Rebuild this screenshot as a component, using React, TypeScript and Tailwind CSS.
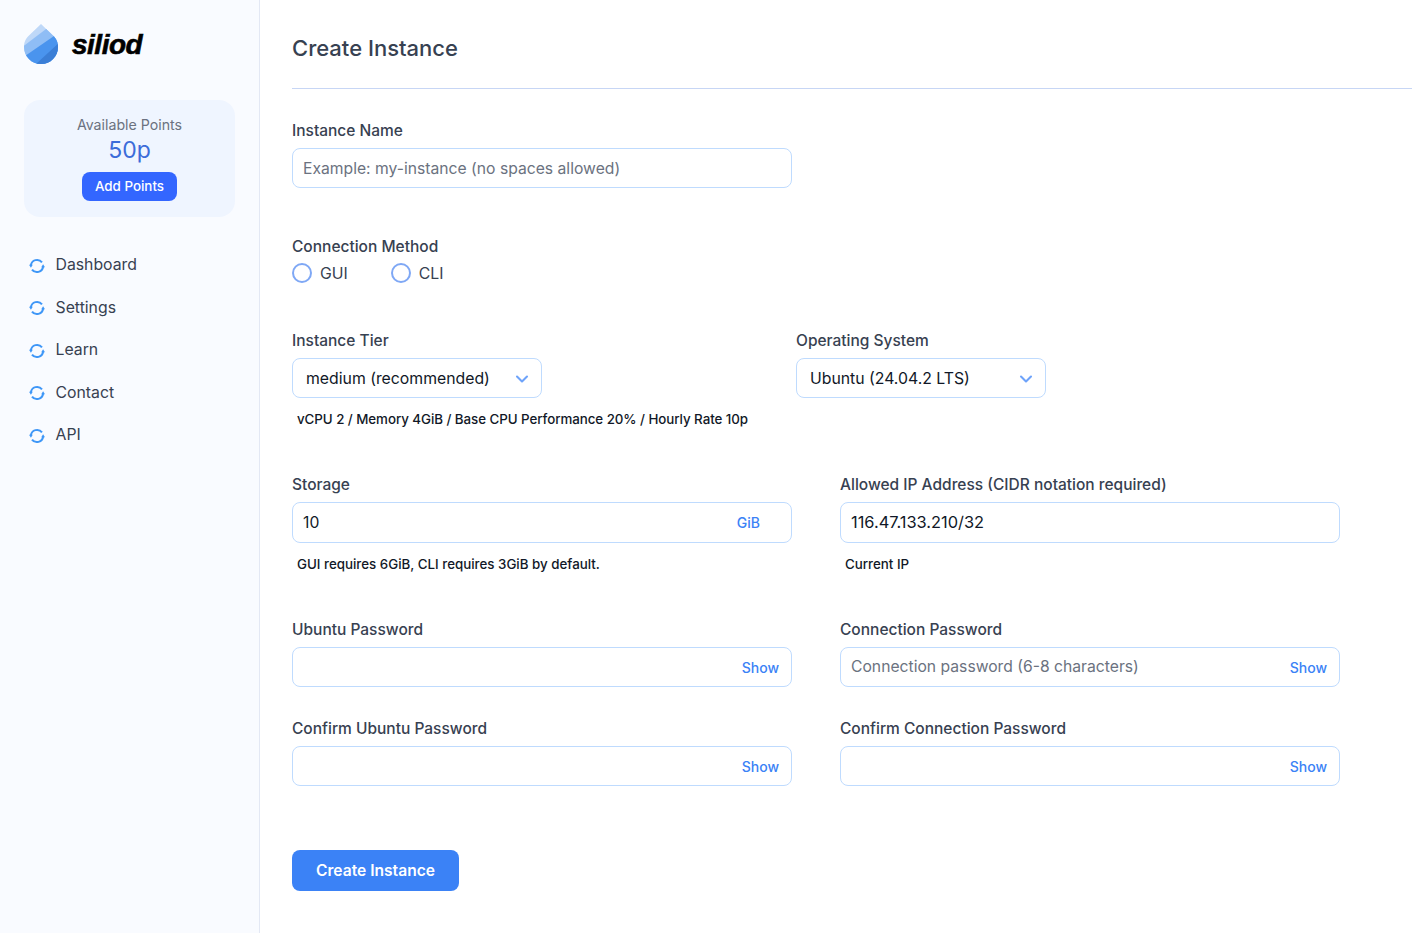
import { ChevronDown } from "lucide-react";

const navItems = ["Dashboard", "Settings", "Learn", "Contact", "API"];

function Logo() {
  return (
    <svg width="34" height="40" viewBox="0 0 34 40" className="shrink-0">
      <defs>
        <clipPath id="drop">
          <path d="M17 0 L28.5 11 C33 15 34 19 34 23 C34 32.5 26.5 40 17 40 C7.5 40 0 32.5 0 23 C0 19 1 15 5.5 11 Z" />
        </clipPath>
      </defs>
      <g clipPath="url(#drop)">
        <rect width="34" height="40" fill="#bfd8f8" />
        <path d="M-3 24 L26 2 L40 2 L40 44 L-3 44 Z" fill="#8fbdf5" />
        <path d="M1 32 L36 8 L40 44 L1 44 Z" fill="#4a94ee" />
        <path d="M12 40 L36 18 L40 44 Z" fill="#3b7ed6" />
      </g>
    </svg>
  );
}

function SyncIcon() {
  return (
    <svg width="16" height="16" viewBox="0 0 16 16" fill="none" className="shrink-0 text-[#3f97f7] mt-[2px]">
      <path d="M1.9 7.4 A6.2 6.2 0 0 1 13 4.4" stroke="currentColor" strokeWidth="2" />
      <path d="M14.1 8.6 A6.2 6.2 0 0 1 3 11.6" stroke="currentColor" strokeWidth="2" />
      <path d="M0 6.8 L3.8 6.8 L1.9 9.8 Z" fill="currentColor" />
      <path d="M12.2 9.2 L16 9.2 L14.1 6.2 Z" fill="currentColor" />
    </svg>
  );
}

function Sidebar() {
  return (
    <aside className="w-[260px] shrink-0 min-h-[933px] bg-[#f9fbff] border-r border-[#e3e8f4] pt-6 px-6">
      <div className="flex items-center gap-[14px] h-10">
        <Logo />
        <span className="mt-[1px] text-[28px] leading-none font-bold italic text-black font-['Liberation_Sans',sans-serif] tracking-[-0.5px] [-webkit-text-stroke:0.6px_black]">siliod</span>
      </div>
      <div className="mt-9 w-[211px] h-[117px] rounded-2xl bg-[#eff5ff] flex flex-col items-center pt-[16px]">
        <div className="text-[14.2px] leading-[18px] text-[#6b7280]">Available Points</div>
        <div className="text-[23px] leading-[30px] mt-[1px] text-[#3b6cd9]">50p</div>
        <button className="mt-[7px] h-[29px] w-[95px] rounded-lg bg-[#3366ff] text-white text-[13.4px] font-medium">Add Points</button>
      </div>
      <nav className="mt-[35px] flex flex-col gap-[17.5px]">
        {navItems.map(item => (
          <div key={item} className="flex items-center gap-[10.5px] pl-[5px] h-[25px]">
            <SyncIcon />
            <span className="text-[15.8px] leading-[25px] text-[#374151]">{item}</span>
          </div>
        ))}
      </nav>
    </aside>
  );
}

function Label({ children }: { children: React.ReactNode }) {
  return <div className="pt-[1px] text-[15.5px] leading-[20px] font-medium text-[#374151]">{children}</div>;
}

function Field({ label, placeholder, right }: { label: string; placeholder?: string; right?: string }) {
  return (
    <div className="w-[500px]">
      <Label>{label}</Label>
      <div className="mt-[7px] h-10 rounded-lg border border-[#bfdbfe] flex items-center justify-between pl-[10px] pr-3 text-[15.7px]">
        {placeholder ? <span className={`text-[#6b7280] ${right ? "-mt-[1px]" : "mt-[1px]"}`}>{placeholder}</span> : <span />}
        {right && <span className="text-sm font-medium text-[#3b82f6] mt-[2px]">{right}</span>}
      </div>
    </div>
  );
}

function Select({ label, value }: { label: string; value: string }) {
  return (
    <div className="w-[250px]">
      <Label>{label}</Label>
      <div className="mt-[7px] h-10 rounded-lg border border-[#bfdbfe] flex items-center justify-between pl-[13px] pr-[9px]">
        <span className="mt-[1px] text-[15.8px] text-[#111827]">{value}</span>
        <ChevronDown className="w-5 h-5 text-[#6ea3fa] mt-[1px]" strokeWidth={2.5} />
      </div>
    </div>
  );
}

function Radio({ label }: { label: string }) {
  return (
    <div className="flex items-center gap-2">
      <span className="w-5 h-5 mb-[2px] rounded-full border-2 border-[#7fa8f5] bg-white" />
      <span className="text-[15.8px] text-[#374151]">{label}</span>
    </div>
  );
}

function Note({ children }: { children: React.ReactNode }) {
  return <div className="text-[13.33px] leading-[18px] font-medium text-[#111827] pl-[5px]">{children}</div>;
}

export default function App() {
  return (
    <div className="flex min-h-[933px] bg-white font-['Inter',sans-serif] overflow-hidden">
      <Sidebar />
      <main className="flex-1 pl-8">
        <div className="h-[89px] border-b border-[#c7d6f5] pt-[33px]">
          <h1 className="text-[22px] leading-[30px] font-medium text-[#374151]">Create Instance</h1>
        </div>

        <div className="mt-[31px]">
          <Field label="Instance Name" placeholder="Example: my-instance (no spaces allowed)" />
        </div>

        {/* Connection Method */}
        <div className="mt-[48px]">
          <Label>Connection Method</Label>
          <div className="mt-[5px] flex gap-[43px] h-6 items-center">
            <Radio label="GUI" />
            <Radio label="CLI" />
          </div>
        </div>

        <div className="mt-[44px] flex gap-[254px]">
          <Select label="Instance Tier" value="medium (recommended)" />
          <Select label="Operating System" value="Ubuntu (24.04.2 LTS)" />
        </div>
        <div className="mt-3">
          <div className="tracking-[-0.05px]">
            <Note>vCPU 2 / Memory 4GiB / Base CPU Performance 20% / Hourly Rate 10p</Note>
          </div>
        </div>

        <div className="mt-[46px] flex gap-12">
          <div className="w-[500px]">
            <Label>Storage</Label>
            <div className="mt-[7px] h-[41px] rounded-lg border border-[#bfdbfe] flex items-center justify-between pl-[10px] pr-[31px]">
              <span className="text-[15.7px] text-[#111827]">10</span>
              <span className="text-sm font-medium text-[#3b82f6]">GiB</span>
            </div>
            <div className="mt-3"><Note>GUI requires 6GiB, CLI requires 3GiB by default.</Note></div>
          </div>
          <div className="w-[500px]">
            <Label>Allowed IP Address (CIDR notation required)</Label>
            <div className="mt-[7px] h-[41px] rounded-lg border border-[#bfdbfe] flex items-center pl-[10px]">
              <span className="text-[16.4px] text-[#111827] -mt-[1px]">116.47.133.210/32</span>
            </div>
            <div className="mt-3"><Note>Current IP</Note></div>
          </div>
        </div>

        <div className="mt-[46px] flex gap-12">
          <Field label="Ubuntu Password" right="Show" />
          <Field label="Connection Password" placeholder="Connection password (6-8 characters)" right="Show" />
        </div>
        <div className="mt-[31px] flex gap-12">
          <Field label="Confirm Ubuntu Password" right="Show" />
          <Field label="Confirm Connection Password" right="Show" />
        </div>

        <button className="mt-16 w-[167px] h-[41px] rounded-lg bg-[#3b82f6] text-white text-[15.6px] font-semibold">Create Instance</button>
      </main>
    </div>
  );
}
